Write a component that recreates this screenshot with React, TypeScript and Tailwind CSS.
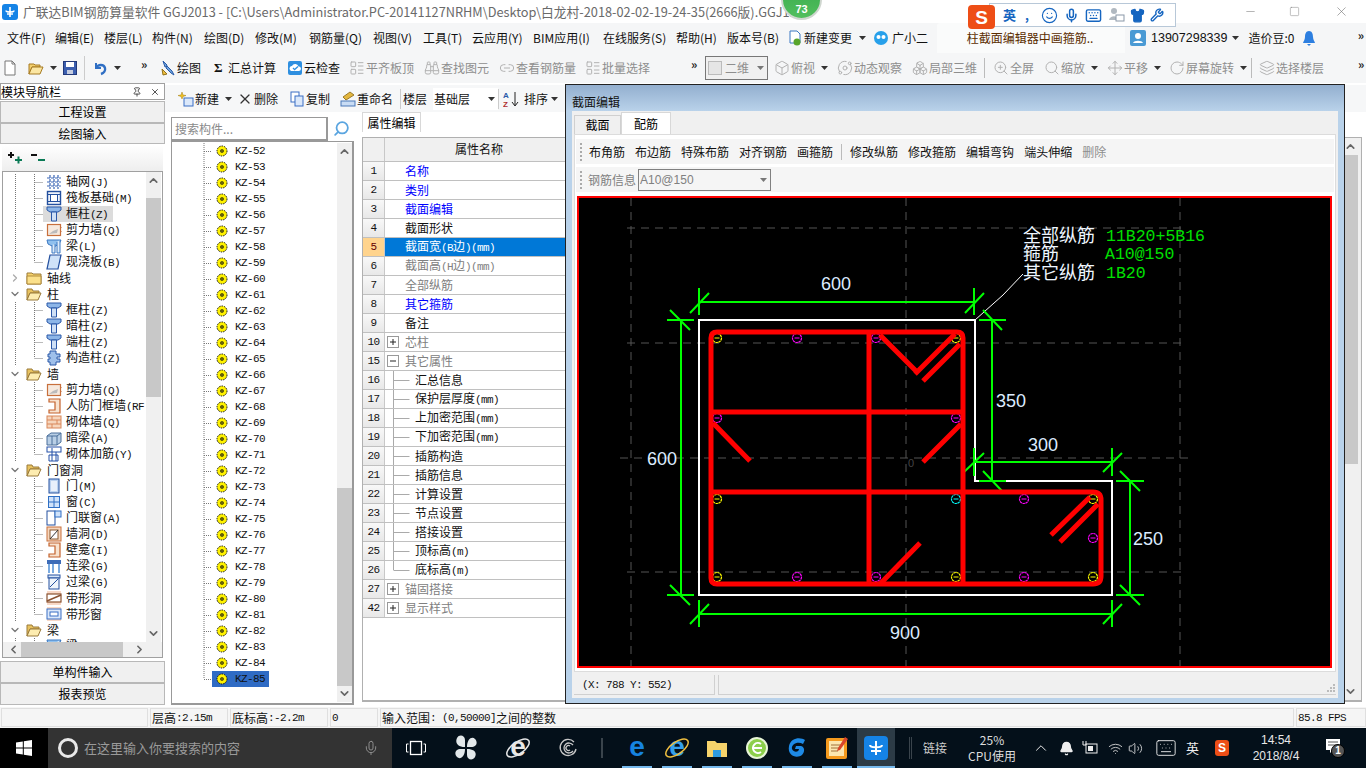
import React from "react";
import { Binoculars, Link2, LayoutList, Box, Orbit, Boxes, ZoomIn, Search, Move, RotateCw, Layers, Mic, Wifi, Volume2, Keyboard, Bell, ChevronUp, ChevronDown, ChevronLeft, ChevronRight, X, Minus, Square, Shirt, Wrench, Smile, Pin } from "lucide-react";

const MONO = "font-['Liberation_Mono',monospace] text-[11px] tracking-[-0.6px]";

function Sim({ t }: { t: string }) {
  const parts = t.split(/([\x20-\x7e]+)/).filter(Boolean);
  return (
    <>
      {parts.map((p, i) => (/^[\x20-\x7e]/.test(p) ? <span key={i} className={`${MONO} whitespace-pre`}>{p}</span> : <span key={i}>{p}</span>))}
    </>
  );
}

function I({ children, s = 16 }: { children: React.ReactNode; s?: number }) {
  return <svg width={s} height={s} viewBox="0 0 16 16" className="shrink-0">{children}</svg>;
}

const Caret = () => <svg width="7" height="4" viewBox="0 0 7 4" className="shrink-0"><path d="M0 0h7L3.5 4z" fill="#333" /></svg>;
const GrayCaret = () => <svg width="7" height="4" viewBox="0 0 7 4" className="shrink-0"><path d="M0 0h7L3.5 4z" fill="#777" /></svg>;
const More = () => <span className="text-[12px] font-bold leading-none text-[#222] tracking-[-1px]">»</span>;

const DocI = () => <I><path d="M3 1h7l3 3v11H3z" fill="#fff" stroke="#777" /><path d="M10 1v3h3" fill="none" stroke="#777" /></I>;
const FolderI = () => <I><path d="M1 4h5l1 1h5v2H4L1 14z" fill="#f3cf6d" stroke="#a67b22" /><path d="M4 7h11l-3 7H1z" fill="#fbe6a2" stroke="#a67b22" /></I>;
const SaveI = () => <I><rect x="1.5" y="1.5" width="13" height="13" fill="#3c5fb0" stroke="#23397a" /><rect x="4" y="2" width="8" height="5" fill="#fff" /><rect x="5" y="10" width="6" height="4" fill="#c6cde0" /></I>;
const UndoI = () => <I><path d="M4 3v5h5" fill="none" stroke="#2f6fc4" strokeWidth="2" /><path d="M4 8c2-4 8-4 9 0 .6 2.5-1 5-4 6" fill="none" stroke="#2f6fc4" strokeWidth="2.4" /></I>;
const DrawI = () => <I><path d="M3 1l4 4-1 3 5 5 3 2-2-4-5-5-2 1z" fill="#6ea3dc" stroke="#2a5ba8" /><path d="M2 9l5 5-4 1z" fill="#f0c040" stroke="#90701a" /></I>;
const CloudI = () => <I><rect x="1" y="1" width="14" height="14" rx="2" fill="#2e8fe0" /><path d="M3 10a2.5 2.5 0 0 1 2-4 3.5 3.5 0 0 1 6.5.6A2 2 0 0 1 12 11H4z" fill="#fff" /><path d="M6 8l1.6 1.6L11 6.5" stroke="#2e8fe0" strokeWidth="1.3" fill="none" /></I>;

const TB = ({ icon, label, off, caret, w }: { icon?: React.ReactNode; label?: string; off?: boolean; caret?: boolean; w: string }) => (
  <div className={`flex items-center shrink-0 ${w} ${off ? "text-[#8e8e8e]" : "text-[#111]"}`}>
    {icon}
    {label && <span className="ml-[1px] whitespace-nowrap">{label}</span>}
    {caret && <span className="ml-[6px] flex"><Caret /></span>}
  </div>
);

const g = (C: any) => <C size={16} strokeWidth={1.5} color="#b2b2b2" className="shrink-0" />;

const menus: [string, string][] = [
  ["文件(F)", "w-[48px]"], ["编辑(E)", "w-[49px]"], ["楼层(L)", "w-[48px]"], ["构件(N)", "w-[52px]"], ["绘图(D)", "w-[51px]"], ["修改(M)", "w-[54px]"],
  ["钢筋量(Q)", "w-[64px]"], ["视图(V)", "w-[50px]"], ["工具(T)", "w-[49px]"], ["云应用(Y)", "w-[61px]"], ["BIM应用(I)", "w-[70px]"], ["在线服务(S)", "w-[73px]"], ["帮助(H)", "w-[51px]"], ["版本号(B)", "w-[60px]"],
];

const Grip = () => <div className="flex flex-col gap-[2px] w-[3px] shrink-0">{[0, 1, 2, 3, 4].map((i) => <div key={i} className="w-[2px] h-[2px] bg-[#aaa]" />)}</div>;

function TreeIcon({ k }: { k: string }) {
  switch (k) {
    case "grid":
      return <I><path d="M1 4h14M1 8h14M1 12h14M4 1v14M8 1v14M12 1v14" stroke="#3b66b5" strokeWidth="1.2" strokeDasharray="3 1" fill="none" /></I>;
    case "raft":
      return <I><rect x="1.5" y="1.5" width="13" height="13" fill="#eef3fb" stroke="#24509f" strokeWidth="1.4" /><rect x="4.5" y="4.5" width="7" height="7" fill="#fff" stroke="#24509f" /><path d="M1 4.5h3M12 4.5h3M1 11.500h3M12 11.500h3" stroke="#24509f" /></I>;
    case "col":
      return <I><path d="M1 1h14v3l-3 2H4L1 4z" fill="#8db6e8" stroke="#2b58a8" /><path d="M5.500 6h5v9h-5z" fill="#cfe0f6" stroke="#2b58a8" /></I>;
    case "wall":
      return <I><rect x="1.5" y="2.5" width="13" height="11" fill="#f6e9de" stroke="#c8703c" strokeWidth="1.2" /><path d="M3 12l8-1 1-4-5 2z" fill="#bbb" /><path d="M15 5v1M15 9v1" stroke="#c8703c" /></I>;
    case "beam":
      return <I><path d="M1 2h14l-2 4-5 3-6-3z" fill="#8fc0ee" stroke="#3a78c2" /><path d="M6 7v8h3V6M11 4v11h3V2" fill="#dceaf8" stroke="#3a78c2" /></I>;
    case "slab":
      return <I><path d="M4 1h11l-3 14H1z" fill="#cfe2f8" stroke="#24509f" strokeWidth="1.2" /></I>;
    case "gz":
      return <I><path d="M4 1h6v3h4v3h-3v2h3v3h-4v3H4v-3H2V9h2V7H2V4h2z" fill="#9fc0ea" stroke="#2b58a8" /></I>;
    case "rf":
      return <I><path d="M3 1h11v14H3v-3h6V4H3z" fill="#f8e3d0" stroke="#c4622c" strokeWidth="1.2" /></I>;
    case "brick":
      return <I><rect x="1" y="2" width="14" height="12" fill="#f6d6bd" stroke="#d9875a" /><path d="M1 6h14M1 10h14M6 2v4M11 6v4M6 10v4" stroke="#d9875a" /></I>;
    case "db":
      return <I><path d="M1 6l4-3h10v9l-4 3H1z" fill="#b9cfe6" stroke="#4a6f9a" /><path d="M6 6v9M11 6v9M1 6h10l4-3" stroke="#4a6f9a" fill="none" /></I>;
    case "jj":
      return <I><rect x="1" y="1" width="14" height="5" fill="#fff" stroke="#2450a8" /><path d="M3 9h9v6H3zM6 2v13M10 6v9" fill="none" stroke="#2450a8" /></I>;
    case "door":
      return <I><rect x="3" y="1" width="10" height="14" fill="#bcd3f0" stroke="#24509f" /><rect x="5" y="3" width="6" height="10" fill="#e8f0fb" /></I>;
    case "win":
      return <I><rect x="2.500" y="2.500" width="11" height="11" fill="#cfe2fa" stroke="#2f6fc4" /><path d="M8 2v12M2 8h12" stroke="#2f6fc4" /></I>;
    case "ml":
      return <I><rect x="1" y="1" width="8" height="14" fill="#fff" stroke="#24509f" /><rect x="9" y="1" width="6" height="6" fill="#cfe2fa" stroke="#2f6fc4" /></I>;
    case "qd":
      return <I><rect x="1" y="1" width="14" height="14" fill="#f6d6bd" stroke="#c8703c" /><rect x="4" y="4" width="8" height="9" fill="#fff" stroke="#8a5a30" /><path d="M4 13l8-9" stroke="#333" /></I>;
    case "ll":
      return <I><rect x="1" y="2" width="14" height="4" fill="#3d6cb8" /><path d="M3 6v9M7 6v9M13 6v9" stroke="#7aaae0" strokeWidth="2" /></I>;
    case "gl":
      return <I><rect x="2" y="1" width="12" height="3" fill="#d6e6f8" stroke="#24509f" /><rect x="3" y="4" width="10" height="11" fill="#eef4fb" stroke="#24509f" /><path d="M4 13l8-8" stroke="#24509f" /></I>;
    case "dxd":
      return <I><rect x="1" y="1" width="14" height="14" fill="#f8d8c6" /><rect x="1" y="4" width="14" height="8" fill="#fff" stroke="#8a5230" strokeWidth="1.2" /><path d="M1 11L15 5" stroke="#8a5230" strokeWidth="1.5" /></I>;
    case "dxc":
      return <I><rect x="1" y="1" width="14" height="14" fill="#f8d8c6" /><rect x="1" y="3" width="14" height="10" fill="#dbe8fa" stroke="#3a6fc4" /><rect x="4" y="6" width="8" height="4" fill="#fff" stroke="#3a6fc4" /></I>;
    default:
      return null;
  }
}

type TR = { t: string; k?: string; g?: "open" | "closed"; last?: boolean; sel?: boolean };
const tree: TR[] = [
  { t: "轴网(J)", k: "grid" }, { t: "筏板基础(M)", k: "raft" }, { t: "框柱(Z)", k: "col", sel: true }, { t: "剪力墙(Q)", k: "wall" }, { t: "梁(L)", k: "beam" }, { t: "现浇板(B)", k: "slab", last: true },
  { t: "轴线", g: "closed" }, { t: "柱", g: "open" },
  { t: "框柱(Z)", k: "col" }, { t: "暗柱(Z)", k: "col" }, { t: "端柱(Z)", k: "col" }, { t: "构造柱(Z)", k: "gz", last: true },
  { t: "墙", g: "open" },
  { t: "剪力墙(Q)", k: "wall" }, { t: "人防门框墙(RF", k: "rf" }, { t: "砌体墙(Q)", k: "brick" }, { t: "暗梁(A)", k: "db" }, { t: "砌体加筋(Y)", k: "jj", last: true },
  { t: "门窗洞", g: "open" },
  { t: "门(M)", k: "door" }, { t: "窗(C)", k: "win" }, { t: "门联窗(A)", k: "ml" }, { t: "墙洞(D)", k: "qd" }, { t: "壁龛(I)", k: "rf" }, { t: "连梁(G)", k: "ll" }, { t: "过梁(G)", k: "gl" }, { t: "带形洞", k: "dxd" }, { t: "带形窗", k: "dxc", last: true },
  { t: "梁", g: "open" }, { t: "梁(L)", k: "beam" },
];

function TreeRow({ r }: { r: TR }) {
  if (r.g) {
    return (
      <div className="flex items-center h-4 whitespace-nowrap">
        <span className="w-[23px] flex justify-center shrink-0 pl-[1px]">
          {r.g === "open" ? <ChevronDown size={12} strokeWidth={2.5} color="#777" /> : <ChevronRight size={12} strokeWidth={2.5} color="#aaa" />}
        </span>
        <svg width="16" height="14" viewBox="0 0 16 14" className="shrink-0">
          {r.g === "open" ? (<><path d="M1 2h5l1 2h6v2H4L1 13z" fill="#e8c25f" stroke="#9a7a3a" /><path d="M4 6h11l-3 7H1z" fill="#fdecb0" stroke="#9a7a3a" /></>) : (<><path d="M1 2h5l1 1h8v10H1z" fill="#f6d26c" stroke="#9a7a3a" /><path d="M1 5h14v8H1z" fill="#fbe08a" stroke="#b08a3a" /></>)}
        </svg>
        <span className="ml-[5px]">{r.t}</span>
      </div>
    );
  }
  return (
    <div className="flex items-center h-4 whitespace-nowrap">
      <svg width="40" height="16" className="shrink-0">
        <path d={`M12.500 0v16M31.500 0v${r.last ? 8 : 16}M31.500 8.500h9`} stroke="#777" strokeDasharray="1 1" fill="none" />
      </svg>
      <div className={`flex items-center h-4 pl-[3px] pr-[5px] ${r.sel ? "bg-[#dcdcdc]" : ""}`}>
        <TreeIcon k={r.k!} />
        <span className="ml-[4px]"><Sim t={r.t} /></span>
      </div>
    </div>
  );
}

const Scroll = ({ thumbTop, thumbH }: { thumbTop: string; thumbH: string }) => (
  <div className="w-[15px] shrink-0 bg-[#f0f0f0] flex flex-col items-center h-full">
    <ChevronUp size={13} strokeWidth={3} color="#666" className="shrink-0 mt-[2px]" />
    <div className={`${thumbTop} ${thumbH} w-full bg-[#c8c8c8] shrink-0`} />
    <div className="flex-1" />
    <ChevronDown size={13} strokeWidth={3} color="#666" className="shrink-0 mb-[2px]" />
  </div>
);

const Gear = () => (
  <svg width="12" height="12" viewBox="0 0 12 12" className="shrink-0">
    <circle cx="6" cy="6" r="5" fill="#fff200" stroke="#111" strokeWidth="1" strokeDasharray="1.5 1" />
    <circle cx="6" cy="6" r="1.800" fill="#111" />
    <circle cx="6" cy="6" r=".7" fill="#fff200" />
  </svg>
);

const kz = Array.from({ length: 34 }, (_, i) => 52 + i);

type P = { n: number; t: string; c?: string; kind?: "plus" | "minus" | "sub" | "sublast"; sel?: boolean };
const BL = "text-[#0000ff]", GR = "text-[#808080]";
const props: P[] = [
  { n: 1, t: "名称", c: BL }, { n: 2, t: "类别", c: BL }, { n: 3, t: "截面编辑", c: BL }, { n: 4, t: "截面形状" },
  { n: 5, t: "截面宽(B边)(mm)", sel: true }, { n: 6, t: "截面高(H边)(mm)", c: GR }, { n: 7, t: "全部纵筋", c: GR }, { n: 8, t: "其它箍筋", c: BL }, { n: 9, t: "备注" },
  { n: 10, t: "芯柱", c: GR, kind: "plus" }, { n: 15, t: "其它属性", c: GR, kind: "minus" },
  { n: 16, t: "汇总信息", kind: "sub" }, { n: 17, t: "保护层厚度(mm)", kind: "sub" }, { n: 18, t: "上加密范围(mm)", kind: "sub" }, { n: 19, t: "下加密范围(mm)", kind: "sub" },
  { n: 20, t: "插筋构造", kind: "sub" }, { n: 21, t: "插筋信息", kind: "sub" }, { n: 22, t: "计算设置", kind: "sub" }, { n: 23, t: "节点设置", kind: "sub" }, { n: 24, t: "搭接设置", kind: "sub" },
  { n: 25, t: "顶标高(m)", kind: "sub" }, { n: 26, t: "底标高(m)", kind: "sublast" },
  { n: 27, t: "锚固搭接", c: GR, kind: "plus" }, { n: 42, t: "显示样式", c: GR, kind: "plus" },
];

function PropRow({ p }: { p: P }) {
  return (
    <div className="flex h-[19px] border-b border-[#c0c0c0] box-border">
      <div className={`w-[22px] shrink-0 flex items-center justify-center border-r border-[#c8c8c8] ${MONO} ${p.sel ? "bg-[#ffd48e] text-[#600]" : "bg-gradient-to-b from-[#f8f8f8] to-[#e8e8e8] text-[#111]"}`}>{p.n}</div>
      <div className={`flex-1 flex items-center whitespace-nowrap ${p.sel ? "bg-[#0078d7] text-white" : p.c ?? "text-[#111]"}`}>
        {(p.kind === "plus" || p.kind === "minus") && (
          <svg width="20" height="18" className="shrink-0">
            <rect x="2.500" y="3.500" width="11" height="11" fill="#fff" stroke="#999" />
            <path d={p.kind === "plus" ? "M5 9h6M8 6v6" : "M5 9h6"} stroke="#222" />
          </svg>
        )}
        {(p.kind === "sub" || p.kind === "sublast") && (
          <svg width="30" height="18" className="shrink-0">
            <path d={`M8.500 -1v${p.kind === "sub" ? 20 : 10}M8.500 9.500h16`} stroke="#aaa" fill="none" />
          </svg>
        )}
        {!p.kind && <span className="w-[20px] shrink-0" />}
        <span><Sim t={p.t} /></span>
      </div>
    </div>
  );
}

function Drawing() {
  const G = "#00ff00";
  const bars: [number, number, string][] = [
    [717, 338, "#ffff00"], [797, 338, "#ff00ff"], [876, 338, "#ff00ff"], [956, 338, "#ffff00"], [717, 418, "#ff00ff"], [956, 418, "#ff00ff"],
    [717, 499, "#ffff00"], [956, 499, "#00ffff"], [1024, 499, "#ff00ff"], [1093, 499, "#ffff00"], [1093, 538, "#ff00ff"],
    [717, 577, "#ffff00"], [797, 577, "#ff00ff"], [876, 577, "#ff00ff"], [956, 577, "#ffff00"], [1024, 577, "#ff00ff"], [1093, 577, "#ffff00"],
  ];
  const green = [
    "M699 302H974M699 288V315M974 288V315M690 313L709 293M965 313L984 293",
    "M681 320V595M667 320H694M667 595H694M670 310L690 330M670 585L690 605",
    "M992 320V481M979 320H1006M979 481H1006M983 310L1002 330M983 471L1002 491",
    "M974 462H1112M974 448V476M1112 448V476M964 472L984 453M1103 472L1122 453",
    "M699 614H1112M699 600V627M1112 600V627M690 624L709 604M1103 624L1122 604",
    "M1130 481V595M1116 481H1144M1116 595H1144M1120 471L1140 491M1120 585L1140 605",
  ];
  const dim = "#dcecff";
  const dimText = (x: number, y: number, t: string) => <text x={x} y={y} fill={dim} fontSize="18" fontFamily="Liberation Sans, sans-serif" textAnchor="middle">{t}</text>;
  return (
    <svg viewBox="579 198 751 468" width="751" height="468" className="block">
      <path d="M906 198V666M631 198V666M1180 198V666M627 228H1185M627 343H1185M620 458H1190M627 572H1185" stroke="#555" strokeDasharray="8 6" fill="none" />
      <path d="M699 320H975V481H1112V595H699Z" fill="none" stroke="#fff" strokeWidth="2" shapeRendering="crispEdges" />
      <path d="M975 320L1003 295L1023 274" fill="none" stroke="#fff" />
      <g stroke={G} strokeWidth="2" fill="none">{green.map((d, i) => <path key={i} d={d} />)}</g>
      {bars.map(([x, y, c], i) => (
        <g key={i}>
          <circle cx={x} cy={y} r="4.500" fill="none" stroke={c} strokeWidth="1.200" strokeDasharray="2.500 .5" />
          <path d={`M${x - 2.5} ${y}h5`} stroke={c} />
        </g>
      ))}
      <g fill="none" stroke="#ff0000" strokeWidth="5">
        <path d="M717 332H957Q963 332 963 338V584" />
        <path d="M711 338Q711 332 717 332M711 338V578Q711 584 717 584H1093Q1101 584 1101 576V500Q1101 492 1093 492H711" />
        <path d="M711 412H963M869 332V584" />
        <path d="M880 335L917 372M955 334L915 374M960 344L923 381M713 423L750 461M961 424L923 462M880 584L920 543M1090 497L1051 535M1098 504L1060 542" />
      </g>
      {dimText(836, 290, "600")}{dimText(1011, 407, "350")}{dimText(1043, 451, "300")}{dimText(662, 465, "600")}{dimText(1148, 545, "250")}{dimText(905, 639, "900")}
      <text x="908" y="467" fill="#444" fontSize="11" fontFamily="Liberation Sans, sans-serif">0</text>
      <g fill="#eef6ff" fontSize="18" fontFamily="Noto Sans CJK SC, sans-serif">
        <text x="1023" y="242">全部纵筋</text><text x="1023" y="260">箍筋</text><text x="1023" y="279">其它纵筋</text>
      </g>
      <g fill="#00e000" fontSize="16.500" fontFamily="Liberation Mono, monospace">
        <text x="1106" y="241" textLength="99">11B20+5B16</text><text x="1105" y="259">A10@150</text><text x="1106" y="278">1B20</text>
      </g>
    </svg>
  );
}

const dialogTools = ["布角筋", "布边筋", "特殊布筋", "对齐钢筋", "画箍筋", "|", "修改纵筋", "修改箍筋", "编辑弯钩", "端头伸缩"];

function Dialog() {
  return (
    <div className="absolute left-[565px] top-[84px] w-[780px] h-[620px] border border-[#222] bg-[#b9d2ea] flex flex-col">
      <div className="h-[26px] shrink-0 bg-gradient-to-b from-[#93afcf] to-[#b9d2ea] flex items-end pl-[6px] text-[#111] leading-[18px]">截面编辑</div>
      <div className="mx-[6px] mb-[5px] flex-1 bg-[#f0f0f0] flex flex-col min-h-0">
        <div className="h-[23px] shrink-0 flex items-end pl-[2px]">
          <div className="w-[47px] h-[19px] border border-b-0 border-[#d0d0d0] bg-[#f0f0f0] flex items-center justify-center">截面</div>
          <div className="w-[50px] h-[22px] border border-b-0 border-[#d8d8d8] bg-white flex items-center justify-center">配筋</div>
        </div>
        <div className="mx-[2px] h-[538px] shrink-0 border border-[#dcdcdc] bg-white flex flex-col">
          <div className="mt-[4px] mx-[1px] h-[25px] shrink-0 bg-[#f5f5f5] flex items-center pl-[4px] text-[#111]">
            <Grip />
            <div className="flex items-center gap-[10px] ml-[6px] whitespace-nowrap">
              {dialogTools.map((t, i) => (t === "|" ? <div key={i} className="w-px h-[16px] bg-[#bbb] mx-[-2px]" /> : <span key={i}>{t}</span>))}
              <span className="text-[#8d8d8d]">删除</span>
            </div>
          </div>
          <div className="mt-[3px] mx-[1px] h-[25px] shrink-0 bg-[#f5f5f5] flex items-center pl-[4px]">
            <Grip />
            <span className="ml-[5px] text-[#808080]">钢筋信息</span>
            <div className="ml-[2px] w-[133px] h-[22px] border border-[#808080] flex items-center justify-between pl-[1px] pr-[3px] text-[#808080] font-['Liberation_Sans',sans-serif]">
              A10@150
              <GrayCaret />
            </div>
          </div>
          <div className="mx-[2px] mt-[4px] w-[755px] h-[472px] border-2 border-[#ff0000] bg-black overflow-hidden">
            <Drawing />
          </div>
        </div>
        <div className="mx-[2px] mt-[3px] h-[20px] flex gap-[3px] text-[#111]">
          <div className="w-[141px] border-r border-b border-[#d0d0d0] flex items-center pl-[8px]"><Sim t="(X: 788 Y: 552)" /></div>
          <div className="flex-1 border-l border-b border-[#d0d0d0] flex items-end justify-end p-[1px]">
            <svg width="10" height="10"><path d="M8 1h2v2H8zM5 4h2v2H5zM8 4h2v2H8zM2 7h2v2H2zM5 7h2v2H5zM8 7h2v2H8z" fill="#bbb" /></svg>
          </div>
        </div>
      </div>
    </div>
  );
}

const Status = ({ w, t, grow }: { w?: string; t?: string; grow?: boolean }) => (
  <div className={`${grow ? "flex-1" : w} h-[19px] border border-[#dfdfdf] flex items-center pl-[1px] whitespace-nowrap text-[#111] shrink-0`}>{t && <Sim t={t} />}</div>
);

const TaskCell = ({ w, on, bar, children }: { w: string; on?: boolean; bar?: boolean; children: React.ReactNode }) => (
  <div className={`relative ${w} h-10 flex items-center justify-center shrink-0 ${on ? "bg-[#2c3b46]" : ""}`}>
    {children}
    {bar && <div className={`absolute bottom-0 h-[2px] bg-[#76b9ed] ${on ? "left-0 right-0" : "left-[5px] right-[5px]"}`} />}
  </div>
);

const ELogo = ({ c, ring }: { c: string; ring?: string }) => (
  <svg width="28" height="28" viewBox="0 0 28 28">
    <text x="14" y="22" textAnchor="middle" fontSize="28" fontWeight="bold" fill={c} fontFamily="Liberation Sans, sans-serif">e</text>
    {ring && <ellipse cx="14" cy="14" rx="13" ry="6" fill="none" stroke={ring} strokeWidth="1.500" transform="rotate(-35 14 14)" />}
  </svg>
);

export default function App() {
  return (
    <div className="relative w-[1366px] h-[768px] overflow-hidden bg-[#f0f0f0] flex flex-col text-[12px] leading-[16px] font-['Noto_Sans_CJK_SC',sans-serif]">
      {/* title */}
      <div className="h-[23px] shrink-0 bg-white flex items-center pl-[2px] text-[#6a6a6a]">
        <svg width="16" height="16" viewBox="0 0 16 16" className="shrink-0"><rect width="16" height="16" rx="3" fill="#1583e6" /><path d="M8 3v10M4 6.500c0 2 8 2 8 0M5 10h6" stroke="#fff" strokeWidth="1.6" fill="none" /></svg>
        <span className="ml-[5px] whitespace-nowrap w-[800px] overflow-hidden text-[12.75px]">广联达BIM钢筋算量软件 GGJ2013 - [C:\Users\Administrator.PC-20141127NRHM\Desktop\白龙村-2018-02-02-19-24-35(2666版).GGJ12]</span>
        <div className="flex-1" />
        <div className="flex items-center text-[#777] shrink-0">
          <Minus size={13} strokeWidth={1} className="mr-[32px]" />
          <Square size={11} strokeWidth={1} className="mr-[34px]" />
          <X size={15} strokeWidth={1} className="mr-[17px]" />
        </div>
      </div>

      {/* menu */}
      <div className="h-[30px] shrink-0 bg-[#f5f6f7] flex items-center pl-[7px] text-[#111] whitespace-nowrap">
        {menus.map(([m, w]) => <div key={m} className={`${w} shrink-0`}>{m}</div>)}
        <div className="flex items-center w-[86px] shrink-0">
          <I><path d="M3 1h7l3 3v9H3z" fill="#fff" stroke="#3a78c2" /><circle cx="10" cy="12" r="3.500" fill="#59a52c" /></I>
          <span className="ml-[1px]">新建变更</span>
          <span className="ml-[7px] flex"><Caret /></span>
        </div>
        <div className="flex items-center w-[64px] shrink-0">
          <I><circle cx="8" cy="8" r="7" fill="#27a0ea" /><circle cx="5.500" cy="7" r="2" fill="#fff" /><circle cx="10.500" cy="7" r="2" fill="#fff" /></I>
          <span className="ml-[3px]">广小二</span>
        </div>
        <div className="w-[188px] h-[30px] bg-[#fafbfb] rounded-t-[3px] flex items-center justify-center text-[#5a2d00] shrink-0 pr-[2px]">柱截面编辑器中画箍筋..</div>
        <div className="flex items-center ml-[5px]">
          <I><rect width="16" height="16" rx="2" fill="#4a9ad4" /><circle cx="8" cy="6" r="3" fill="#fff" /><path d="M3 13c1-3 9-3 10 0z" fill="#fff" /></I>
          <span className="ml-[5px] text-[12.500px] font-['Liberation_Sans',sans-serif]">13907298339</span>
          <span className="ml-[5px] flex"><Caret /></span>
          <span className="ml-[9px]">造价豆:0</span>
          <svg width="14" height="17" viewBox="0 0 14 17" className="ml-[8px]"><path d="M7 1c3 0 4 3 4 6s2 5 2 6H1c0-1 2-3 2-6s1-6 4-6z" fill="#2d7fe0" /><path d="M5 14h4l-2 2z" fill="#2d7fe0" /></svg>
        </div>
        <div className="ml-auto mr-[3px] self-start pt-[4px]"><More /></div>
      </div>

      {/* toolbar */}
      <div className="h-[30px] shrink-0 bg-[#f5f6f7] flex items-center pl-[2px] text-[#111]">
        <TB w="w-[26px]" icon={<DocI />} />
        <TB w="w-[34px]" icon={<FolderI />} caret />
        <TB w="w-[22px]" icon={<SaveI />} />
        <div className="w-px h-[24px] bg-[#ccc] mr-[7px] shrink-0" />
        <TB w="w-[49px]" icon={<UndoI />} caret />
        <div className="w-[19px] shrink-0 self-start pt-[3px]"><More /></div>
        <TB w="w-[54px]" icon={<DrawI />} label="绘图" />
        <div className="flex items-center w-[73px] shrink-0"><span className="w-[13px] font-bold text-[13px] font-['Liberation_Serif',serif]">Σ</span><span className="ml-[1px]">汇总计算</span></div>
        <TB w="w-[62px]" icon={<CloudI />} label="云检查" />
        <TB w="w-[75px]" off icon={g(LayoutList)} label="平齐板顶" />
        <TB w="w-[75px]" off icon={g(Binoculars)} label="查找图元" />
        <TB w="w-[86px]" off icon={g(Link2)} label="查看钢筋量" />
        <TB w="w-[106px]" off icon={g(LayoutList)} label="批量选择" />
        <div className="w-[14px] shrink-0 self-start pt-[3px]"><More /></div>
        <div className="w-[63px] h-[24px] border border-[#777] flex items-center pl-[2px] text-[#8e8e8e] shrink-0 bg-[#f0f0f0]">
          <span className="w-[14px] h-[14px] bg-[#e5e5e5] border border-[#bbb] shrink-0" />
          <span className="ml-[3px]">二维</span>
          <span className="ml-[8px] flex"><GrayCaret /></span>
        </div>
        <div className="w-[6px] shrink-0" />
        <TB w="w-[63px]" off icon={g(Box)} label="俯视" caret />
        <TB w="w-[75px]" off icon={g(Orbit)} label="动态观察" />
        <TB w="w-[72px]" off icon={g(Boxes)} label="局部三维" />
        <div className="w-px h-[20px] bg-[#bbb] mr-[8px] shrink-0" />
        <TB w="w-[51px]" off icon={g(ZoomIn)} label="全屏" />
        <TB w="w-[63px]" off icon={g(Search)} label="缩放" caret />
        <TB w="w-[62px]" off icon={g(Move)} label="平移" caret />
        <TB w="w-[82px]" off icon={g(RotateCw)} label="屏幕旋转" caret />
        <div className="w-px h-[20px] bg-[#bbb] mr-[7px] shrink-0" />
        <TB w="w-[99px]" off icon={g(Layers)} label="选择楼层" />
        <div className="self-start pt-[3px]"><More /></div>
      </div>

      {/* main */}
      <div className="h-[624px] shrink-0 flex">
        {/* left nav */}
        <div className="w-[165px] shrink-0 flex flex-col bg-white">
          <div className="h-[17px] flex items-center justify-between border border-[#a0a0a0] pr-[4px] shrink-0">
            <span>模块导航栏</span>
            <span className="flex items-center gap-[8px]"><Pin size={10} color="#333" /><X size={10} color="#333" /></span>
          </div>
          <div className="mt-[1px] h-[22px] shrink-0 border border-[#b8b8b8] bg-[#f0f0f0] flex items-center justify-center">工程设置</div>
          <div className="h-[21px] shrink-0 border border-[#b8b8b8] bg-[#f0f0f0] flex items-center justify-center">绘图输入</div>
          <div className="h-[26px] shrink-0 mx-[2px] mt-[1px] bg-gradient-to-b from-white to-[#eeeeee] flex items-center pl-[5px] gap-[7px]">
            <svg width="16" height="14" viewBox="0 0 16 14"><path d="M1 4h6M4 1v6" stroke="#111" strokeWidth="2" /><path d="M8 9h7M11.500 5.500v7" stroke="#0a7a55" strokeWidth="2" /></svg>
            <svg width="16" height="14" viewBox="0 0 16 14"><path d="M1 4h6" stroke="#111" strokeWidth="2" /><path d="M8 9h7" stroke="#0a7a55" strokeWidth="2" /></svg>
          </div>
          <div className="h-[487px] shrink-0 mx-[2px] border border-[#a0a0a0] flex flex-col">
            <div className="flex-1 min-h-0 flex">
              <div className="w-[143px] shrink-0 overflow-hidden pt-[2px] text-[#111]">
                {tree.map((r, i) => <TreeRow key={i} r={r} />)}
              </div>
              <Scroll thumbTop="mt-[11px]" thumbH="h-[199px]" />
            </div>
            <div className="h-[15px] shrink-0 bg-[#f0f0f0] flex items-center">
              <ChevronLeft size={13} strokeWidth={3} color="#666" className="ml-[4px] shrink-0" />
              <div className="ml-[1px] w-[102px] h-full bg-[#c8c8c8]" />
              <div className="flex-1" />
              <ChevronRight size={13} strokeWidth={3} color="#666" className="mr-[16px] shrink-0" />
            </div>
          </div>
          <div className="h-[3px] shrink-0" />
          {["单构件输入", "报表预览"].map((t) => (
            <div key={t} className="h-[22px] shrink-0 border border-[#b8b8b8] bg-[#f0f0f0] flex items-center justify-center">{t}</div>
          ))}
        </div>

        {/* work area */}
        <div className="flex-1 min-w-0 flex flex-col bg-white">
          <div className="h-[27px] shrink-0 flex items-center bg-[#f6f7f8] pl-[13px] mt-[2px] text-[#111] whitespace-nowrap">
            <TB w="w-[59px]" icon={<I><rect x="6" y="7" width="9" height="8" fill="#dbe8fa" stroke="#3a6fc4" /><path d="M4 1l1 3 3 .5-3 1L4 8 3 5.500 0 4.500 3 4z" fill="#f0c020" stroke="#a68012" strokeWidth=".5" /></I>} label="新建" caret />
            <TB w="w-[52px]" icon={<X size={16} strokeWidth={1.8} color="#333" className="shrink-0" />} label="删除" />
            <TB w="w-[51px]" icon={<I><rect x="2" y="1" width="8" height="10" fill="#fff" stroke="#3a6fc4" /><rect x="6" y="5" width="8" height="10" fill="#dbe8fa" stroke="#3a6fc4" /></I>} label="复制" />
            <TB w="w-[60px]" icon={<I><path d="M3 6l7-5 4 3-8 5z" fill="#e4b73e" stroke="#9a7a2a" /><rect x="1" y="10" width="14" height="5" fill="#c9dcf4" stroke="#4a78b8" /></I>} label="重命名" />
            <div className="w-px h-[20px] bg-[#ccc] mr-[2px] shrink-0" />
            <span className="w-[30px] shrink-0">楼层</span>
            <div className="w-[65px] h-[22px] bg-white flex items-center justify-between pr-[3px] shrink-0 pl-[1px]">基础层<Caret /></div>
            <div className="w-px h-[20px] bg-[#ccc] mr-[4px] shrink-0" />
            <svg width="17" height="18" viewBox="0 0 17 18" className="shrink-0"><text x="0" y="8" fontSize="8" fontWeight="bold" fill="#2a5ba8" fontFamily="Liberation Sans, sans-serif">A</text><text x="0" y="17" fontSize="8" fontWeight="bold" fill="#b03030" fontFamily="Liberation Sans, sans-serif">Z</text><path d="M12 2v13M9 12l3 4 3-4" stroke="#222" fill="none" /></svg>
            <span className="ml-[4px]">排序</span>
            <span className="ml-[3px] flex"><Caret /></span>
          </div>
          <div className="flex-1 min-h-0 flex">
            {/* list */}
            <div className="w-[195px] shrink-0 flex flex-col pl-[6px]">
              <div className="h-[29px] shrink-0 pt-[5px] flex items-start">
                <div className="w-[157px] h-[24px] border-2 border-t border-l border-[#999] bg-white flex items-center pl-[3px] text-[#8a8a8a] text-[12px]">搜索构件...</div>
                <span className="ml-[5px] mt-[3px]"><Search size={17} strokeWidth={2.5} color="#5aa5e0" className="-scale-x-100" /></span>
              </div>
              <div className="w-[183px] h-[564px] border-2 border-t border-l border-[#999] flex shrink-0">
                <div className="flex-1 overflow-hidden pt-[1px] text-[#111]">
                  {kz.map((n) => (
                    <div key={n} className="h-4 flex items-center">
                      <svg width="40" height="16" className="shrink-0"><path d={`M32 0v${n === 85 ? 8 : 16}M32 8.500h8`} stroke="#777" strokeDasharray="1 1" fill="none" /></svg>
                      <div className={`flex items-center h-4 w-[57px] pl-[4px] ${n === 85 ? "bg-[#2f6bc4]" : ""}`}>
                        <Gear />
                        <span className={`ml-[7px] ${MONO}`}>KZ-{n}</span>
                      </div>
                    </div>
                  ))}
                </div>
                <div className="py-[1px] h-full"><Scroll thumbTop="mt-[330px]" thumbH="h-[198px]" /></div>
              </div>
            </div>
            {/* props */}
            <div className="flex-1 min-w-0 flex flex-col pl-[2px] pr-[4px]">
              <div className="h-[25px] shrink-0 flex items-start">
                <div className="w-[59px] h-[20px] border border-[#d8d8d8] border-b-0 flex items-center justify-center bg-white">属性编辑</div>
              </div>
              <div className="h-[565px] shrink-0 border-2 border-r border-[#b0b0b0] border-t border-l bg-[#f0f0f0] flex">
                <div className="flex-1 min-w-0 flex flex-col bg-white">
                  <div className="h-[24px] shrink-0 flex border-b border-[#c0c0c0] text-[#111]">
                    <div className="w-[22px] bg-[#f0f0f0] border-r border-[#c8c8c8]" />
                    <div className="w-[188px] bg-[#f0f0f0] flex items-center justify-center pb-[1px]">属性名称</div>
                    <div className="flex-1 bg-[#f0f0f0]" />
                  </div>
                  {props.map((p) => <PropRow key={p.n} p={p} />)}
                </div>
                <div className="mr-[3px]"><Scroll thumbTop="mt-[2px]" thumbH="h-[309px]" /></div>
              </div>
            </div>
          </div>
        </div>
      </div>

      {/* status */}
      <div className="h-[21px] shrink-0 flex gap-[2px] items-center pl-[1px] bg-[#f5f5f5]">
        <Status w="w-[147px]" />
        <Status w="w-[78px]" t="层高:2.15m" />
        <Status w="w-[98px]" t="底标高:-2.2m" />
        <Status w="w-[48px]" t="0" />
        <Status grow t="输入范围: (0,50000]之间的整数" />
        <Status w="w-[70px]" t="85.8 FPS" />
      </div>

      {/* taskbar */}
      <div className="h-10 shrink-0 bg-[#04101a] flex items-center text-white">
        <div className="w-[48px] h-10 bg-black flex items-center justify-center shrink-0">
          <svg width="16" height="16" viewBox="0 0 16 16"><path d="M0 2.500l6.800-1v6H0zM7.800 1.300L16 0v7.500H7.800zM0 8.500h6.800v6l-6.800-1zM7.800 8.500H16V16l-8.200-1.200z" fill="#fff" /></svg>
        </div>
        <div className="w-[344px] h-10 bg-[#333] flex items-center pl-[10px] text-[#9a9a9a] text-[13px] shrink-0">
          <span className="w-[20px] h-[20px] rounded-full border-[3px] border-[#e8e8e8] shrink-0" />
          <span className="ml-[6px] flex-1">在这里输入你要搜索的内容</span>
          <Mic size={16} strokeWidth={1.3} color="#999" className="mr-[13px]" />
        </div>
        <TaskCell w="w-[48px]"><svg width="20" height="16" viewBox="0 0 20 16"><rect x="4.500" y="1.500" width="11" height="13" fill="none" stroke="#fff" strokeWidth="1.3" /><path d="M2.500 4H.5v8h2M17.500 4h2v8h-2" stroke="#fff" fill="none" /></svg></TaskCell>
        <TaskCell w="w-[52px]"><svg width="22" height="26" viewBox="0 0 22 26"><path d="M10 12C2 12 0 7 2 3s8-3 8 2zM12 12c0-8 5-11 8-8s2 8-4 8zM12 14c8 0 10 4 8 8s-8 3-8-2zM10 14c0 8-5 11-8 8s-2-8 4-8z" fill="#e3e8ea" /></svg></TaskCell>
        <TaskCell w="w-[52px]"><ELogo c="#e8e8e8" ring="#e8e8e8" /></TaskCell>
        <TaskCell w="w-[48px]"><svg width="20" height="20" viewBox="0 0 20 20"><path d="M16 4a8 8 0 1 0 2 7M15 7a5 5 0 1 0 0 6M12 8a2.500 2.500 0 1 0 0 4" fill="none" stroke="#c8c8c8" strokeWidth="1.300" /></svg></TaskCell>
        <div className="w-[2px] h-[20px] bg-[#3a444c] ml-[9px] mr-[14px] shrink-0" />
        <TaskCell w="w-[40px]" bar><ELogo c="#1683e0" /></TaskCell>
        <TaskCell w="w-[40px]" bar><ELogo c="#34a0ec" ring="#f0c040" /></TaskCell>
        <TaskCell w="w-[40px]" bar><svg width="22" height="20" viewBox="0 0 22 20"><path d="M1 3h8l2 2h10v14H1z" fill="#f6d36b" /><rect x="7" y="12" width="8" height="7" fill="#2f9be0" /></svg></TaskCell>
        <TaskCell w="w-[40px]" bar><svg width="24" height="26" viewBox="0 0 24 26"><circle cx="12" cy="13" r="10" fill="#8ccf4b" stroke="#e8f5d8" strokeWidth="2" /><path d="M7 13h10M16 9a5 5 0 1 0 0 8" stroke="#fff" strokeWidth="2" fill="none" /></svg></TaskCell>
        <TaskCell w="w-[40px]" bar><svg width="24" height="26" viewBox="0 0 24 26"><path d="M20 5c-4-3-14-3-16 6-2 10 8 13 13 9 3-3 3-8-1-9h-5l-1 3h4c0 3-5 4-7 0-1-5 6-8 11-5z" fill="#1e8ae6" /></svg></TaskCell>
        <TaskCell w="w-[40px]" bar><svg width="24" height="24" viewBox="0 0 24 24"><rect x="1" y="2" width="21" height="21" rx="2" fill="#f59a1e" /><rect x="4" y="5" width="15" height="15" fill="#fbe6b0" /><path d="M6 9h10M6 12h10M6 15h7" stroke="#a0703a" /><path d="M20 1l3 2-8 11-3 1 1-3z" fill="#d8452a" /></svg></TaskCell>
        <TaskCell w="w-[38px]" on bar><svg width="24" height="24" viewBox="0 0 24 24"><rect width="24" height="24" rx="4" fill="#1583e6" /><path d="M12 5v14M6 9c0 3 12 3 12 0M7 15h10" stroke="#fff" strokeWidth="2" fill="none" /></svg></TaskCell>
        <div className="w-[3px] h-[22px] border-x border-[#3a444c] ml-[14px] mr-[11px] shrink-0" />
        <span className="w-[24px] text-[#ccc] shrink-0 whitespace-nowrap">链接</span>
        <div className="w-[86px] ml-[2px] shrink-0 text-center leading-[16px]"><div className="text-[#ddd]">25%</div><div className="text-[#ddd]">CPU使用</div></div>
        <div className="flex items-center shrink-0 ml-[-3px]">
          <ChevronUp size={18} strokeWidth={1.3} color="#eee" />
          <Bell size={15} fill="#eee" color="#eee" className="ml-[9px]" />
          <svg width="16" height="14" viewBox="0 0 16 14" className="ml-[8px]"><rect x="4" y="3" width="11" height="9" fill="none" stroke="#eee" /><rect x="6" y="5" width="5" height="5" fill="#eee" /><path d="M1 0v4h3V0" stroke="#eee" fill="none" /></svg>
          <Wifi size={15} strokeWidth={1.5} color="#ccc" className="ml-[10px]" />
          <Volume2 size={15} strokeWidth={1.3} color="#eee" className="ml-[5px]" />
          <Keyboard size={22} strokeWidth={1} color="#eee" className="ml-[12px]" />
          <span className="ml-[9px] text-[13px] text-[#eee]">英</span>
          <span className="ml-[16px] w-[14px] h-[16px] bg-[#ee4e16] rounded-[3px] flex items-center justify-center text-[12px] font-bold text-white leading-none font-['Liberation_Sans',sans-serif]">S</span>
        </div>
        <div className="w-[64px] ml-[15px] text-center shrink-0 text-[#e8e8e8] leading-[16px] whitespace-nowrap"><div className="font-['Liberation_Sans',sans-serif]">14:54</div><div className="font-['Liberation_Sans',sans-serif]">2018/8/4</div></div>
        <div className="relative w-[20px] h-[20px] ml-[17px] shrink-0">
          <svg width="16" height="16" viewBox="0 0 16 16"><path d="M1 1h14v11H8l-3 3v-3H1z" fill="#fff" /><path d="M3 4h10M3 7h10" stroke="#555" /></svg>
          <span className="absolute left-[6px] top-[6px] w-[14px] h-[14px] rounded-full bg-[#555] border border-black text-[10px] leading-[12px] font-bold text-center text-white font-['Liberation_Sans',sans-serif]">1</span>
        </div>
      </div>

      <Dialog />

      {/* floating speed ball */}
      <div className="absolute left-[781px] top-[-21px] w-[41px] h-[41px] rounded-full bg-gradient-to-b from-[#35a84a] to-[#52bf5e] border-2 border-[#cfd6cf] flex items-end justify-center text-white text-[11px] font-bold leading-[14px] pb-[2px] font-['Liberation_Sans',sans-serif]">73</div>

      {/* floating IME bar */}
      <div className="absolute left-[968px] top-[3px] flex items-start">
        <div className="w-[27px] h-[24px] rounded-[4px] bg-[#ee4e16] flex items-center justify-center text-white font-bold text-[19px] leading-none font-['Liberation_Sans',sans-serif] mt-[2px] relative z-10">S</div>
        <div className="ml-[-6px] w-[187px] h-[24px] border border-[#b8c8d8] bg-white flex items-center text-[#1565c0] pl-[13px]">
          <span className="font-bold text-[13px] w-[22px] shrink-0">英</span>
          <span className="w-[16px] font-bold shrink-0">,</span>
          <Smile size={17} strokeWidth={1.6} className="shrink-0" />
          <Mic size={15} strokeWidth={2.4} className="ml-[6px] shrink-0" />
          <Keyboard size={17} strokeWidth={2} className="ml-[6px] shrink-0" />
          <svg width="17" height="16" viewBox="0 0 17 16" className="ml-[6px] shrink-0"><circle cx="6" cy="4" r="3" fill="#b0b8c0" /><path d="M1 13c1-5 9-5 10 0z" fill="#b0b8c0" /><rect x="8" y="8" width="8" height="6" fill="#fff" stroke="#8a98a8" /></svg>
          <Shirt size={15} fill="#1565c0" className="ml-[5px] shrink-0" />
          <Wrench size={14} strokeWidth={2.4} className="ml-[5px] shrink-0" />
        </div>
      </div>
    </div>
  );
}
